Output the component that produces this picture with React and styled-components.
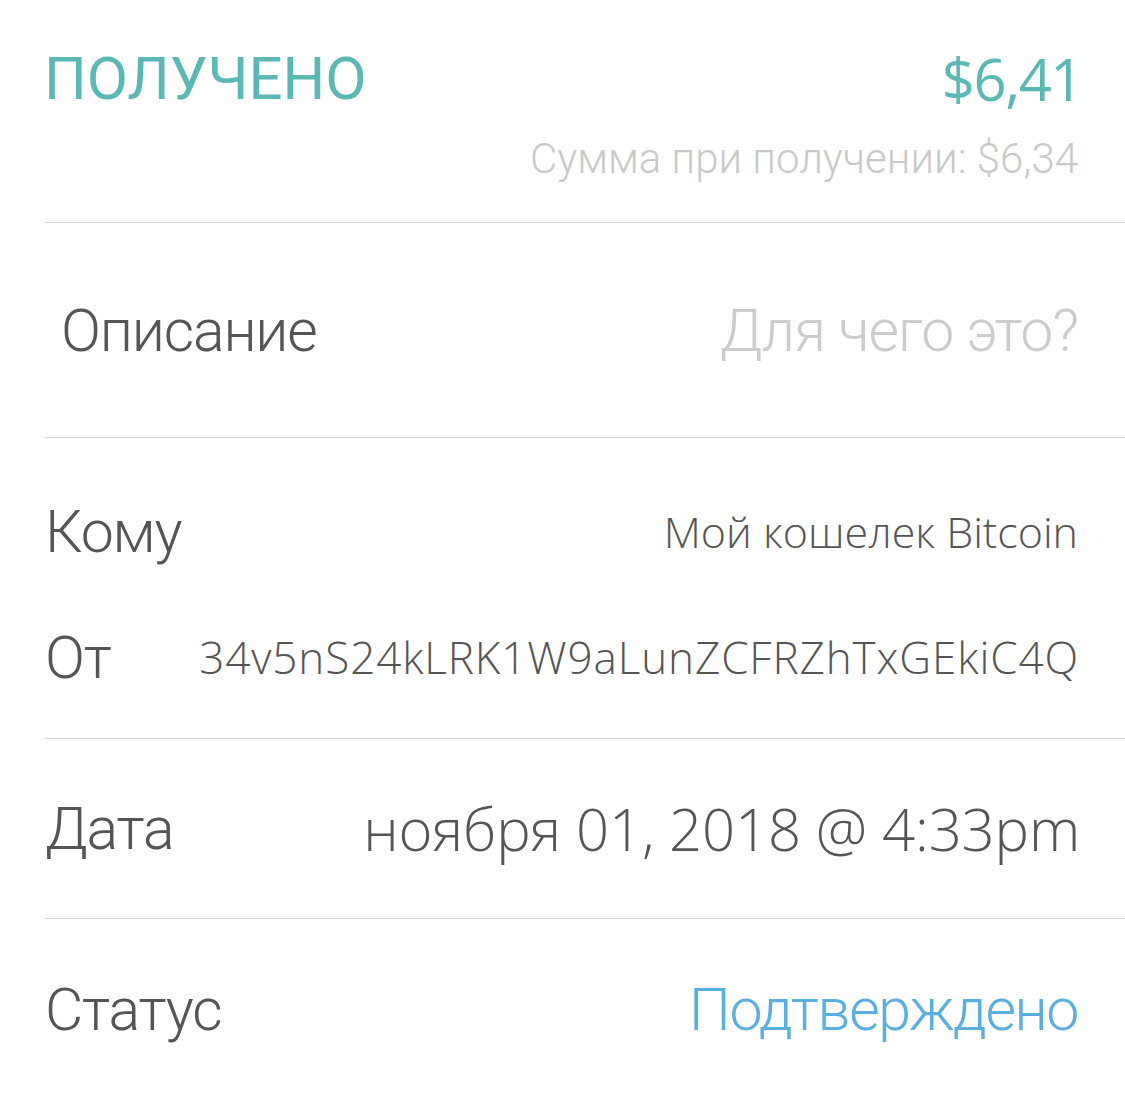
import React from "react";
import styled, { createGlobalStyle } from "styled-components";

const GlobalStyle = createGlobalStyle`
  html, body {
    margin: 0;
    padding: 0;
    background: #ffffff;
  }
  body {
    font-family: Roboto, "Liberation Sans", sans-serif;
    -webkit-font-smoothing: antialiased;
  }
`;

const Page = styled.div`
  width: 1125px;
  min-height: 1114px;
  padding-left: 45px;
  box-sizing: border-box;
  background: #ffffff;
`;

const Section = styled.section`
  height: ${(p) => p.$height}px;
  padding: ${(p) => p.$pad || "0"};
  padding-right: 47px;
  box-sizing: border-box;
  display: flex;
  flex-direction: column;
  justify-content: ${(p) => p.$justify || "center"};
  border-bottom: ${(p) => (p.$last ? "none" : "1px solid #d3d3d3")};
`;

const Row = styled.div`
  display: flex;
  align-items: center;
  justify-content: space-between;
  height: ${(p) => p.$height || "auto"};
  margin-top: ${(p) => p.$gap || 0}px;
`;

const Title = styled.h1`
  margin: 0;
  font-family: Roboto, "Liberation Sans", sans-serif;
  font-weight: 400;
  font-size: 60px;
  line-height: 1;
  letter-spacing: 0px;
  margin-left: -1px;
  color: #5cb8b4;
`;

const Amount = styled.span`
  font-family: "Open Sans", "DejaVu Sans", sans-serif;
  font-weight: 500;
  font-size: 58px;
  line-height: 1;
  letter-spacing: -1.5px;
  margin-right: -4px;
  color: #5cb8b4;
`;

const SubAmount = styled.div`
  margin-left: auto;
  font-family: Roboto, "Liberation Sans", sans-serif;
  font-weight: 300;
  font-size: 42px;
  line-height: 1;
  letter-spacing: 0px;
  color: #c9c9c9;
`;

const Label = styled.span`
  font-family: Roboto, "Liberation Sans", sans-serif;
  font-weight: 300;
  font-size: 59px;
  line-height: 1;
  letter-spacing: -1.2px;
  color: #555555;
  padding-left: ${(p) => p.$indent || 0}px;
`;

const Placeholder = styled.span`
  font-family: Roboto, "Liberation Sans", sans-serif;
  font-weight: 300;
  font-size: 59px;
  line-height: 1;
  letter-spacing: -1.1px;
  color: #cccccc;
`;

const Value = styled.span`
  font-family: "Open Sans", "DejaVu Sans", sans-serif;
  font-weight: 300;
  font-size: ${(p) => p.$size || 44}px;
  line-height: 1;
  letter-spacing: ${(p) => p.$spacing || 0}px;
  margin-right: ${(p) => p.$shift || 0}px;
  color: #555555;
  white-space: nowrap;
`;

const Status = styled.span`
  font-family: Roboto, "Liberation Sans", sans-serif;
  font-weight: 300;
  font-size: 59px;
  line-height: 1;
  letter-spacing: -1.4px;
  color: #5aaee0;
`;

export default function App() {
  return (
    <>
      <GlobalStyle />
      <Page>
        <Section $height={223} $justify="flex-start" $pad="52px 0 0 0">
          <Row $height="54px">
            <Title>ПОЛУЧЕНО</Title>
            <Amount>$6,41</Amount>
          </Row>
          <Row $height="34px" $gap={36}>
            <SubAmount>Сумма при получении: $6,34</SubAmount>
          </Row>
        </Section>

        <Section $height={215}>
          <Row>
            <Label $indent={16}>Описание</Label>
            <Placeholder>Для чего это?</Placeholder>
          </Row>
        </Section>

        <Section $height={301} $justify="flex-start" $pad="30px 0 0 0">
          <Row $height="126px">
            <Label>Кому</Label>
            <Value $size={43} $spacing={0}>Мой кошелек Bitcoin</Value>
          </Row>
          <Row $height="126px">
            <Label>От</Label>
            <Value $size={44} $spacing={0.9} $shift={-1}>
              34v5nS24kLRK1W9aLunZCFRZhTxGEkiC4Q
            </Value>
          </Row>
        </Section>

        <Section $height={180}>
          <Row>
            <Label>Дата</Label>
            <Value $size={58} $spacing={-0.15} $shift={-2}>
              ноября 01, 2018 @ 4:33pm
            </Value>
          </Row>
        </Section>

        <Section $height={180} $last>
          <Row>
            <Label>Статус</Label>
            <Status>Подтверждено</Status>
          </Row>
        </Section>
      </Page>
    </>
  );
}
